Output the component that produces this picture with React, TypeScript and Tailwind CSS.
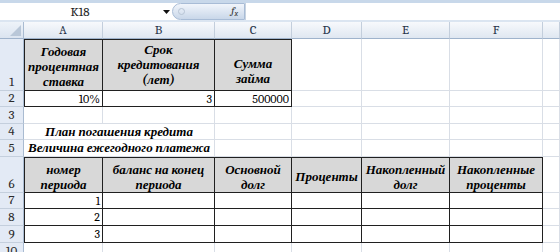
import React from "react";

const GRID = "border-r border-b border-[#d9dee6]";
const DARK = "border-r border-b border-[#202020]";
const HEAD = "font-bold italic text-[13px] leading-[15px] text-center";

function Cell({
  dark,
  className = "",
  children,
}: {
  dark?: boolean;
  className?: string;
  children?: React.ReactNode;
}) {
  return <div className={`${dark ? DARK : GRID} ${className}`}>{children}</div>;
}

function RowNum({ n }: { n: number }) {
  return (
    <div className="flex items-end justify-center border-r border-b border-r-[#a9bbd1] border-b-[#c4cfdd] bg-[#e3eaf5] pb-[1px] text-[13px] leading-[14px] text-[#2b2b2b]">
      {n}
    </div>
  );
}

function Empty({ count }: { count: number }) {
  return (
    <>
      {Array.from({ length: count }).map((_, i) => (
        <Cell key={i} />
      ))}
    </>
  );
}

function FormulaBar() {
  return (
    <div className="h-[22px] border-t-[3px] border-[#c8d8ea] bg-[#dbe5f1] pb-[1px]">
      <div className="flex h-[17px] bg-white">
        <div className="flex w-[160px] items-center justify-center text-[13px] text-[#1e1e1e]">K18</div>
        <div className="flex w-[12px] items-center justify-center">
          <svg width="7" height="4" viewBox="0 0 7 4">
            <path d="M0 0h7L3.5 4z" fill="#111" />
          </svg>
        </div>
        <div className="flex w-[73px] items-center justify-between rounded-l-full border border-[#a8bcd6] bg-gradient-to-b from-[#f1f5fb] to-[#c9d7e9] pl-[5px] pr-[6px]">
          <span className="h-[7px] w-[7px] rounded-full border border-[#b7c4d4]" />
          <span className="text-[11px] italic text-[#333]">
            f<sub className="text-[8px]">x</sub>
          </span>
        </div>
        <div className="flex-1 border-l border-[#c8d3e0]" />
      </div>
    </div>
  );
}

export default function App() {
  const letters = ["A", "B", "C", "D", "E", "F", ""];
  return (
    <div className="h-[252px] w-[560px] overflow-hidden bg-white font-serif text-black">
      <FormulaBar />
      <div className="grid grid-cols-[24px_79px_112px_77px_70px_88px_93px_1fr] grid-rows-[17px_52px_16px_17px_16px_17px_36px_16px_17px_17px_17px]">
        {/* column headers */}
        <div className="relative border-r border-b border-r-[#a9bbd1] border-b-[#9fb3cc] bg-gradient-to-b from-[#eef3f9] to-[#dbe4f0]">
          <svg className="absolute bottom-[2px] right-[2px]" width="11" height="11" viewBox="0 0 11 11">
            <path d="M11 0V11H0z" fill="#b9c7d8" />
          </svg>
        </div>
        {letters.map((l, i) => (
          <div
            key={i}
            className="flex items-center justify-center border-r border-b border-r-[#c3cedc] border-b-[#9fb3cc] bg-gradient-to-b from-[#f7f9fc] to-[#dfe7f1] text-[13px] text-[#27344a]"
          >
            {l}
          </div>
        ))}

        {/* row 1 */}
        <RowNum n={1} />
        <Cell dark className={`flex flex-col items-center justify-end border-l border-t bg-[#d8d8d8] pb-[1px] ${HEAD}`}>
          <span>Годовая</span>
          <span>процентная</span>
          <span>ставка</span>
        </Cell>
        <Cell dark className={`flex flex-col items-center justify-center border-t bg-[#d8d8d8] pb-[1px] ${HEAD}`}>
          <span>Срок</span>
          <span>кредитования</span>
          <span>(лет)</span>
        </Cell>
        <Cell dark className={`flex flex-col items-center justify-end border-t bg-[#d8d8d8] pb-[4px] ${HEAD}`}>
          <span>Сумма</span>
          <span>займа</span>
        </Cell>
        <Empty count={4} />

        {/* row 2 */}
        <RowNum n={2} />
        <Cell dark className="flex items-center justify-end border-l pr-[2px] text-[12px]">10%</Cell>
        <Cell dark className="flex items-center justify-end pr-[2px] text-[12px]">3</Cell>
        <Cell dark className="flex items-center justify-end pr-[2px] text-[12px]">500000</Cell>
        <Empty count={4} />

        {/* row 3 */}
        <RowNum n={3} />
        <Empty count={7} />

        {/* row 4 */}
        <RowNum n={4} />
        <Cell className="col-span-2 flex items-center justify-center text-[13px] font-bold italic">
          План погашения кредита
        </Cell>
        <Empty count={5} />

        {/* row 5 */}
        <RowNum n={5} />
        <Cell className="col-span-2 flex items-center justify-center text-[13px] font-bold italic">
          Величина ежегодного платежа
        </Cell>
        <Empty count={5} />

        {/* row 6 */}
        <RowNum n={6} />
        <Cell dark className={`flex flex-col items-center justify-center border-l border-t bg-[#d8d8d8] pt-[3px] ${HEAD}`}>
          <span>номер</span>
          <span>периода</span>
        </Cell>
        <Cell dark className={`flex flex-col items-center justify-center border-t bg-[#d8d8d8] pt-[3px] ${HEAD}`}>
          <span>баланс на конец</span>
          <span>периода</span>
        </Cell>
        <Cell dark className={`flex flex-col items-center justify-center border-t bg-[#d8d8d8] pt-[3px] ${HEAD}`}>
          <span>Основной</span>
          <span>долг</span>
        </Cell>
        <Cell dark className={`flex flex-col items-center justify-center border-t bg-[#d8d8d8] pt-[3px] ${HEAD}`}>
          <span>Проценты</span>
        </Cell>
        <Cell dark className={`flex flex-col items-center justify-center border-t bg-[#d8d8d8] pt-[3px] ${HEAD}`}>
          <span>Накопленный</span>
          <span>долг</span>
        </Cell>
        <Cell dark className={`flex flex-col items-center justify-center border-t bg-[#d8d8d8] pt-[3px] ${HEAD}`}>
          <span>Накопленные</span>
          <span>проценты</span>
        </Cell>
        <Cell />

        {/* rows 7-9 */}
        {[1, 2, 3].map((n) => (
          <React.Fragment key={n}>
            <RowNum n={n + 6} />
            <Cell dark className="flex items-center justify-end border-l pr-[2px] text-[12px]">
              {n}
            </Cell>
            <Cell dark />
            <Cell dark />
            <Cell dark />
            <Cell dark />
            <Cell dark />
            <Cell />
          </React.Fragment>
        ))}

        {/* row 10 */}
        <RowNum n={10} />
        <Empty count={7} />
      </div>
    </div>
  );
}
